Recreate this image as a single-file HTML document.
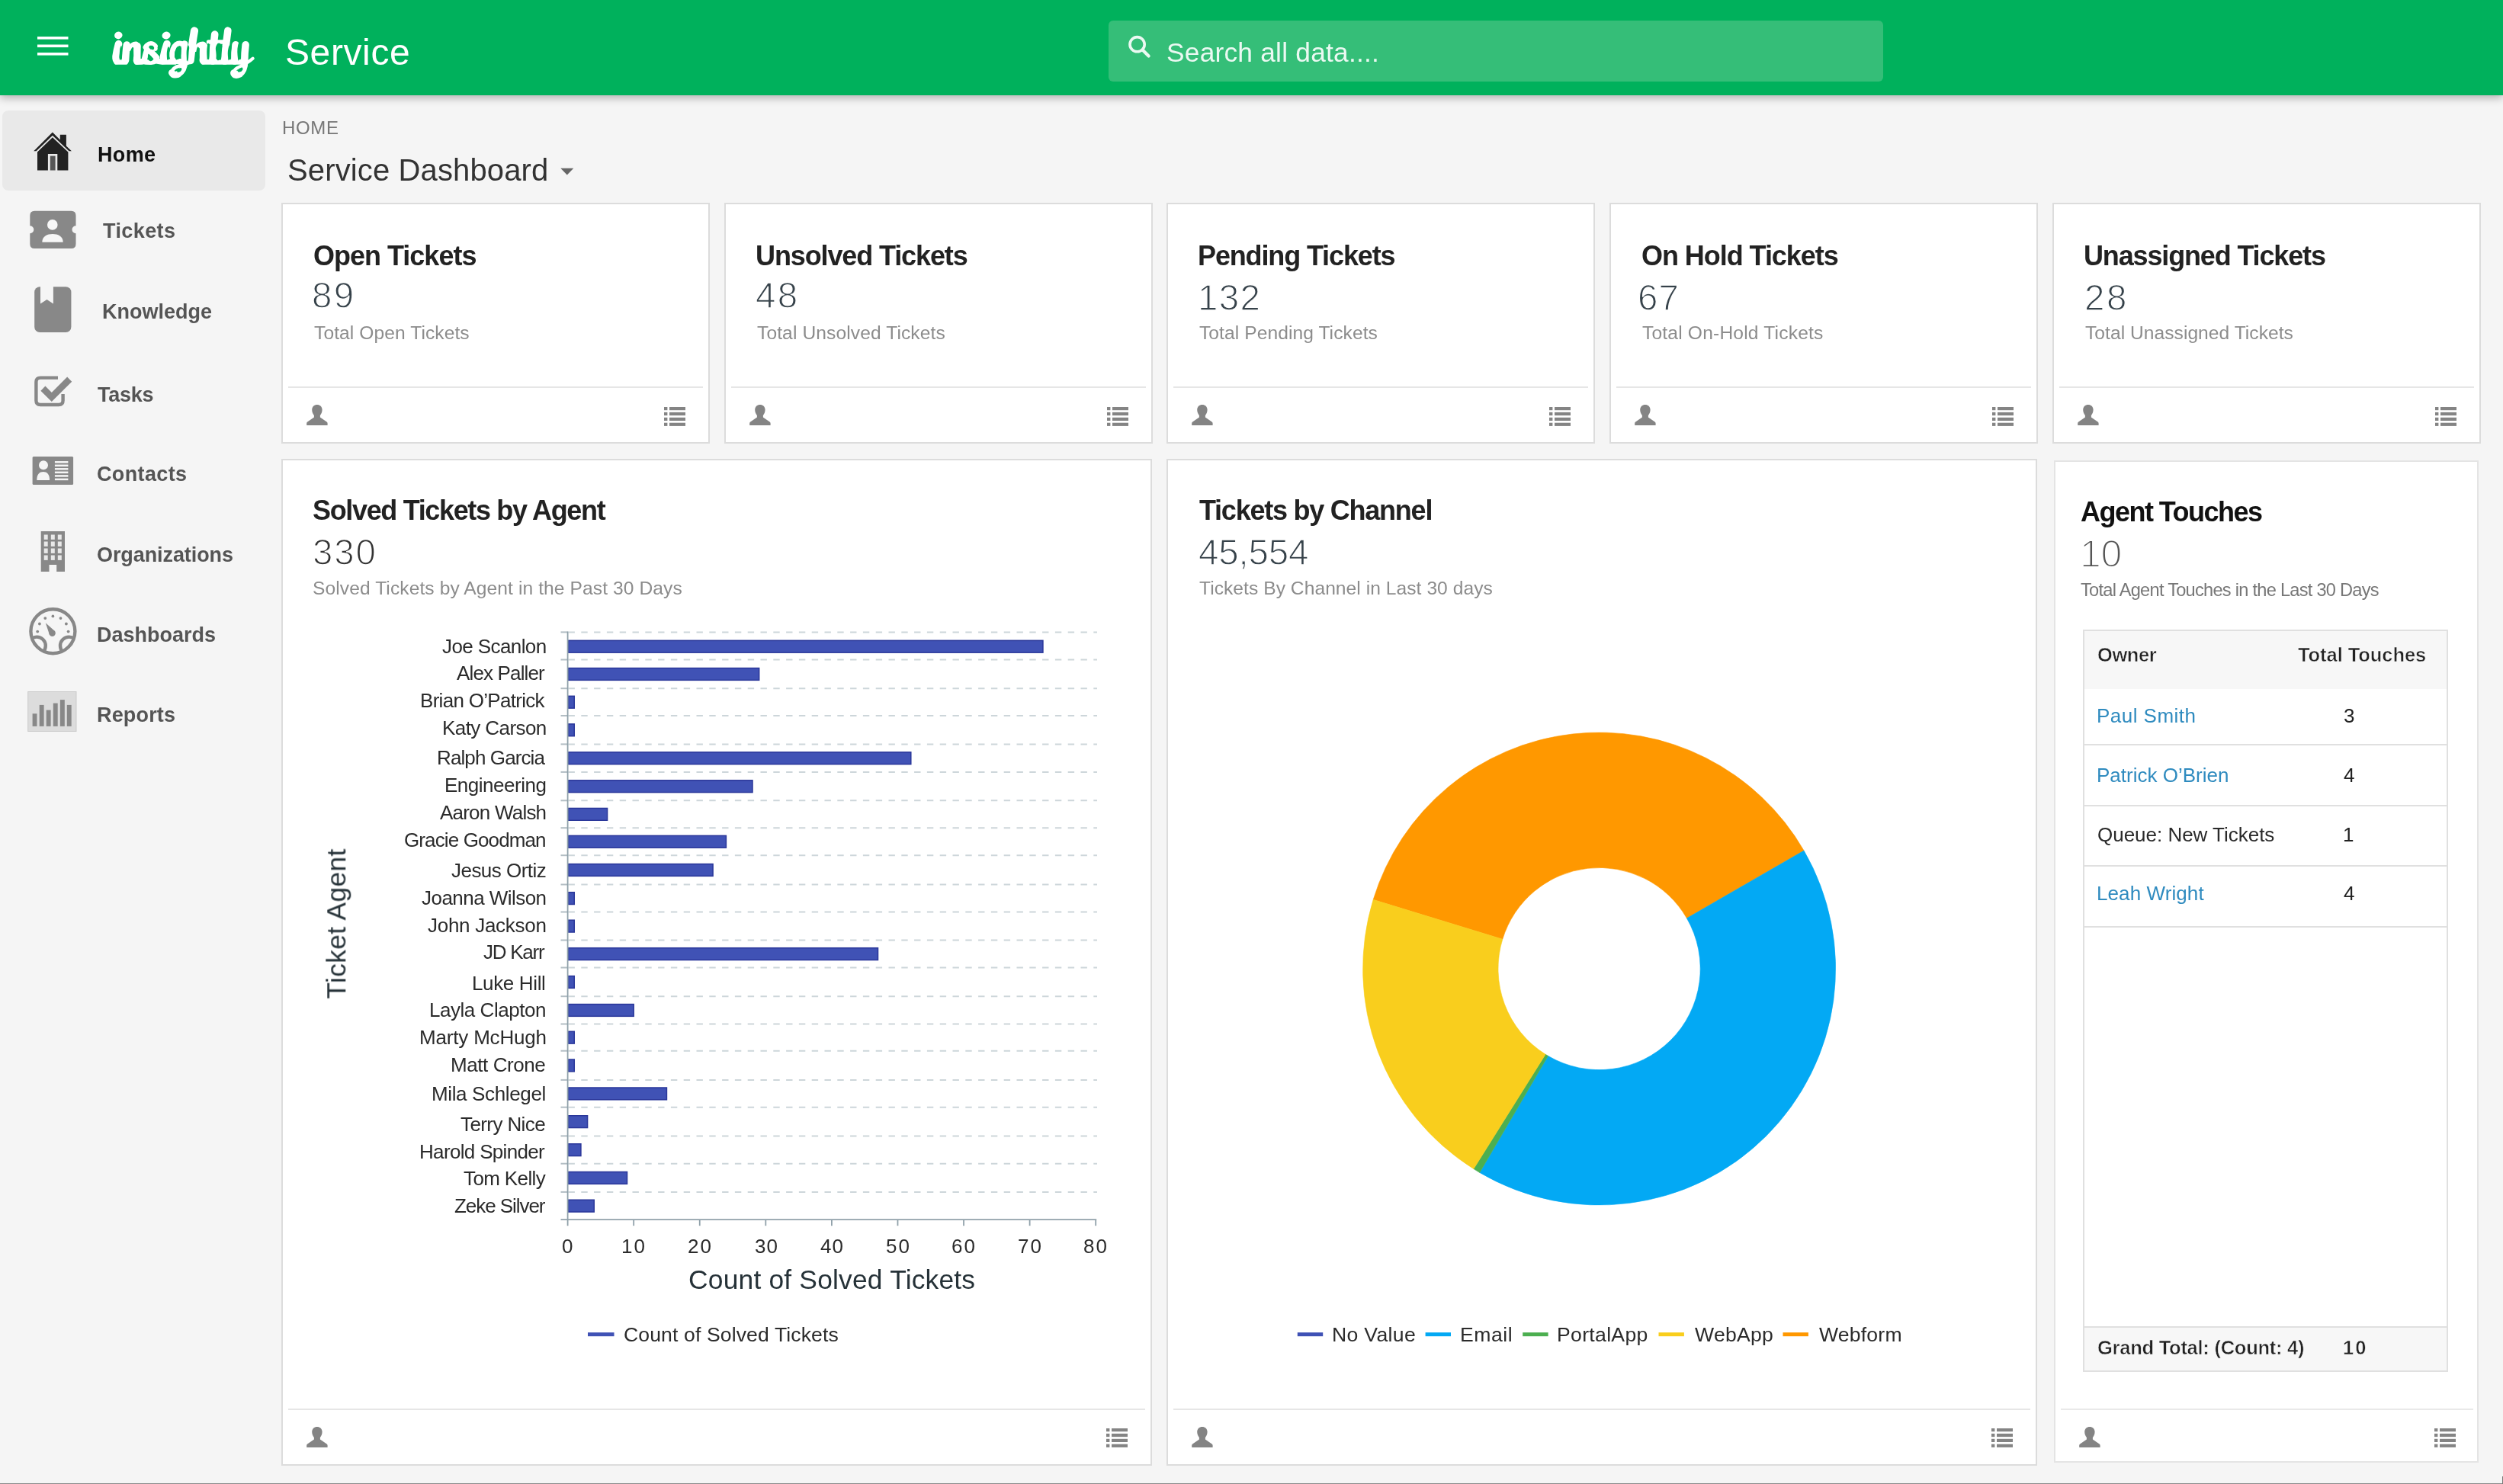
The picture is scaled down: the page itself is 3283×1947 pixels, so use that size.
<!DOCTYPE html>
<html lang="en"><head><meta charset="utf-8"><title>Insightly Service - Service Dashboard</title>
<style>
html,body{margin:0;padding:0;}
body{width:3283px;height:1947px;overflow:hidden;position:relative;background:#f5f5f5;font-family:"Liberation Sans",sans-serif;}
.t{position:absolute;line-height:1;white-space:nowrap;margin:0;padding:0;will-change:transform;}
.a{position:absolute;}
svg{position:absolute;overflow:visible;}
.card{position:absolute;background:#fff;border:2px solid #dcdcdc;box-sizing:border-box;}
.hr{position:absolute;height:2px;background:#e6e6e6;}

</style></head>
<body>
<div class="a" style="left:0;top:0;width:3283px;height:125px;background:#00b15c;box-shadow:0 3px 11px rgba(0,0,0,.30);"></div>
<svg style="left:49px;top:46px" width="41" height="28" viewBox="0 0 41 28"><rect x="0" y="2" width="40.5" height="3.6" fill="#fff"/><rect x="0" y="12.5" width="40.5" height="3.6" fill="#fff"/><rect x="0" y="23" width="40.5" height="3.6" fill="#fff"/></svg>
<svg style="left:144px;top:34px" width="195.00" height="75.00" viewBox="0 0 4134 1590"><g fill="none" stroke="#fff" stroke-linecap="round" stroke-linejoin="round"><path d="M245 500 Q190 700 170 850 Q165 940 200 965" stroke-width="203"/><path d="M190 1000 L435 1000" stroke-width="153"/><path d="M472 530 Q445 750 435 960" stroke-width="203"/><path d="M545 640 Q620 490 730 495" stroke-width="119"/><path d="M760 560 Q752 800 756 960" stroke-width="209"/><path d="M748 1000 L900 995" stroke-width="158"/><path d="M950 975 Q1000 760 1060 575" stroke-width="158"/><path d="M1030 545 Q1150 440 1265 560" stroke-width="136"/><path d="M1010 595 Q1160 720 1298 880" stroke-width="169"/><path d="M1300 880 Q1310 1005 1150 1012 Q1000 1015 900 985" stroke-width="141"/><path d="M1290 975 L1450 1000" stroke-width="153"/><path d="M1590 500 Q1520 700 1495 850 Q1490 940 1520 965" stroke-width="203"/><path d="M1510 1000 L1800 1000" stroke-width="153"/><path d="M2010 500 Q1850 450 1760 640 Q1690 850 1790 985 L1960 985" stroke-width="147"/><path d="M2080 500 Q2072 750 2075 1000 Q2070 1230 1900 1345 Q1760 1385 1725 1300" stroke-width="186"/><path d="M1725 1300 Q1725 1210 1850 1140 Q2050 1075 2250 1000" stroke-width="102"/><path d="M2353 135 Q2288 500 2241 960" stroke-width="215"/><path d="M2388 650 Q2468 500 2588 500" stroke-width="136"/><path d="M2608 560 Q2596 800 2603 960" stroke-width="220"/><path d="M2603 1000 L2858 1000" stroke-width="153"/><path d="M2920 235 Q2863 600 2863 960" stroke-width="203"/><path d="M2748 445 L3168 445" stroke-width="119"/><path d="M2868 1000 L3198 1000" stroke-width="153"/><path d="M3283 130 Q3218 550 3195 960" stroke-width="203"/><path d="M3193 1000 L3468 1000" stroke-width="153"/><path d="M3498 525 Q3468 750 3473 960" stroke-width="203"/><path d="M3473 1000 L3738 1000" stroke-width="153"/><path d="M3776 525 Q3748 750 3746 1000 Q3738 1230 3608 1335 Q3478 1395 3453 1310" stroke-width="203"/><path d="M3453 1310 Q3443 1225 3558 1160 Q3758 1080 3908 960 L3978 905" stroke-width="90"/></g><g fill="#fff"><ellipse cx="240" cy="262" rx="112" ry="100" transform="rotate(-15 240 262)"/><ellipse cx="1570" cy="265" rx="118" ry="103" transform="rotate(-15 1570 265)"/><ellipse cx="1262" cy="628" rx="68" ry="72" transform="rotate(0 1262 628)"/></g><g fill="#00b15c"><path d="M300 584 C321 542 326 516 336 623 C346 730 344 801 330 904 C317 1008 316 933 296 933 C275 933 276 966 268 904 C261 843 262 856 273 749 C283 642 279 626 300 584Z"/><path d="M594 652 C619 597 627 584 649 604 C672 623 659 610 661 710 C662 810 670 828 654 904 C637 980 639 940 611 938 C582 937 580 956 568 899 C555 843 564 851 573 768 C582 686 568 707 594 652Z"/><path d="M1096 569 C1110 542 1111 542 1152 545 C1193 548 1195 545 1219 579 C1242 613 1236 620 1222 647 C1209 673 1215 665 1178 658 C1140 652 1136 657 1109 627 C1082 598 1082 597 1096 569Z"/><path d="M1064 811 C1076 776 1065 770 1107 803 C1148 835 1164 854 1189 908 C1213 961 1209 944 1180 964 C1151 984 1139 986 1103 968 C1066 949 1083 960 1070 908 C1057 855 1052 845 1064 811Z"/><path d="M1599 653 C1621 556 1638 569 1655 614 C1672 659 1656 685 1651 788 C1645 892 1651 876 1638 924 C1625 973 1628 940 1612 934 C1596 927 1595 999 1590 905 C1586 811 1578 750 1599 653Z"/><path d="M1899 574 C1944 554 1944 548 1972 593 C2001 638 1992 619 1985 709 C1978 800 1985 790 1951 865 C1916 939 1925 919 1882 932 C1839 945 1848 952 1822 903 C1796 855 1799 871 1805 787 C1810 703 1807 722 1839 651 C1871 580 1855 593 1899 574Z"/><path d="M1887 1209 C1916 1178 1920 1176 1956 1170 C1992 1163 1988 1162 1995 1189 C2002 1217 2006 1220 1978 1252 C1949 1285 1945 1283 1909 1286 C1873 1289 1877 1288 1870 1262 C1863 1236 1859 1239 1887 1209Z"/><path d="M2146 614 C2168 504 2187 523 2202 575 C2218 627 2202 643 2194 769 C2185 895 2191 888 2177 953 C2162 1018 2164 979 2151 963 C2138 947 2139 1021 2138 905 C2136 788 2125 724 2146 614Z"/><path d="M2415 653 C2439 556 2457 575 2484 614 C2510 653 2492 666 2494 769 C2495 872 2503 864 2488 924 C2473 984 2475 955 2449 948 C2423 942 2422 1003 2411 905 C2399 806 2390 750 2415 653Z"/><path d="M2712 554 C2735 438 2755 483 2773 535 C2790 586 2771 586 2766 709 C2760 832 2769 832 2755 903 C2742 974 2742 929 2725 923 C2709 916 2710 1007 2706 884 C2701 761 2690 670 2712 554Z"/><path d="M2969 535 C3018 445 3064 477 3107 535 C3150 593 3102 587 3098 710 C3094 833 3108 826 3094 904 C3079 981 3094 933 3055 943 C3016 952 3009 978 2978 933 C2946 888 2963 939 2960 807 C2958 674 2920 626 2969 535Z"/><path d="M3299 613 C3326 503 3349 529 3372 574 C3395 620 3371 639 3368 749 C3365 859 3377 843 3364 904 C3351 966 3354 933 3329 933 C3305 933 3301 1011 3291 904 C3281 797 3272 723 3299 613Z"/><path d="M3565 535 C3594 405 3622 457 3647 515 C3672 573 3644 580 3641 709 C3638 839 3652 829 3638 903 C3624 978 3625 932 3599 932 C3574 932 3572 1036 3561 903 C3549 771 3536 664 3565 535Z"/><path d="M3567 1223 C3596 1191 3602 1179 3645 1165 C3687 1150 3683 1152 3694 1179 C3704 1207 3707 1213 3676 1247 C3646 1281 3643 1276 3603 1281 C3564 1286 3571 1281 3559 1262 C3547 1242 3539 1255 3567 1223Z"/></g></svg>
<div class="t" style="left:373.70px;top:44.52px;font-size:48px;color:#fff;letter-spacing:0.607px;">Service</div>
<div class="a" style="left:1454px;top:27px;width:1016px;height:79.5px;border-radius:6px;background:#35be78;"></div>
<svg style="left:1476px;top:42px" width="40" height="40" viewBox="0 0 40 40" fill="none" stroke="#ecf9f2" stroke-width="3.6"><circle cx="15.6" cy="16.2" r="9.6"/><path d="M22.6 23.4 L30.6 31.4" stroke-linecap="round" stroke-width="4.2"/></svg>
<div class="t" style="left:1530.30px;top:50.87px;font-size:35.3px;color:rgba(255,255,255,.9);letter-spacing:0.229px;">Search all data....</div>
<div class="a" style="left:3px;top:145px;width:345px;height:105px;border-radius:8px;background:#e9e9e9;"></div>
<svg style="left:40px;top:170px" width="60" height="58" viewBox="40 170 60 58">
<path d="M44.2 198.3 L68.9 173.6 L78.8 183.5 L78.8 176.8 L86.9 176.8 L86.9 191.6 L93.9 198.3 L90.5 198.3 L68.9 177.8 L47.6 198.3 Z" fill="#222"/>
<path d="M49 199.5 L68.9 180.3 L89.4 199.5 L89.4 223.5 L75.3 223.5 L75.3 202 L62.9 202 L62.9 223.5 L49 223.5 Z" fill="#222"/>
<rect x="65.8" y="204.6" width="6.8" height="18.9" fill="#555"/>
</svg>
<svg style="left:36px;top:272px" width="68" height="58" viewBox="36 272 68 58">
<path d="M45.3 276.7 H93.5 Q99.5 276.7 99.5 282.7 V296.3 A5 5 0 0 0 99.5 306.3 V319.9 Q99.5 325.9 93.5 325.9 H45.3 Q39.3 325.9 39.3 319.9 V306.3 A5 5 0 0 0 39.3 296.3 V282.7 Q39.3 276.7 45.3 276.7 Z" fill="#888"/>
<circle cx="68.8" cy="294.9" r="6.8" fill="#f7f7f7"/>
<path d="M55.3 317.8 C55.3 310 62 307 69 307 C76 307 82.7 310 82.7 317.8 Z" fill="#f7f7f7"/>
</svg>
<svg style="left:40px;top:372px" width="60" height="70" viewBox="40 372 60 70">
<rect x="45.2" y="376.2" width="48.2" height="59.9" rx="7" fill="#888"/>
<path d="M53 375 H69.9 V398.4 L61.5 393 L53 398.4 Z" fill="#f5f5f5"/>
</svg>
<svg style="left:40px;top:488px" width="60" height="52" viewBox="40 488 60 52" fill="none" stroke="#888">
<path d="M76 495.6 H53 Q47.4 495.6 47.4 501.2 V525.5 Q47.4 531 53 531 H77 Q82.6 531 82.6 525.5 V517" stroke-width="4.4"/>
<path d="M56.4 509.6 L67.8 521 L91.2 497.6" stroke-width="8.6"/>
</svg>
<svg style="left:40px;top:594px" width="60" height="46" viewBox="40 594 60 46">
<rect x="42.6" y="598.9" width="53.5" height="37" rx="1.5" fill="#888"/>
<circle cx="57" cy="610.3" r="6" fill="#f5f5f5"/>
<path d="M48.3 629.9 C48.3 622 52 619 56.7 619 C61.4 619 65.1 622 65.1 629.9 Z" fill="#f5f5f5"/>
<rect x="71.9" y="605.05" width="17.5" height="2.5" fill="#f5f5f5"/><rect x="71.9" y="609.55" width="17.5" height="2.5" fill="#f5f5f5"/><rect x="71.9" y="614.05" width="17.5" height="2.5" fill="#f5f5f5"/><rect x="71.9" y="618.55" width="17.5" height="2.5" fill="#f5f5f5"/><rect x="71.9" y="623.15" width="17.5" height="2.5" fill="#f5f5f5"/><rect x="71.9" y="627.65" width="17.5" height="2.5" fill="#f5f5f5"/>
</svg>
<svg style="left:50px;top:692px" width="40" height="62" viewBox="50 692 40 62">
<path d="M53.7 697 H85 V750.1 H74.2 V741 H64.5 V750.1 H53.7 Z" fill="#888"/>
<rect x="57.7" y="701.5" width="5" height="6.4" fill="#e9e9e9"/><rect x="57.7" y="710.5" width="5" height="6.4" fill="#e9e9e9"/><rect x="57.7" y="719.5" width="5" height="6.4" fill="#e9e9e9"/><rect x="57.7" y="728.5" width="5" height="6.4" fill="#e9e9e9"/><rect x="66.8" y="701.5" width="5" height="6.4" fill="#e9e9e9"/><rect x="66.8" y="710.5" width="5" height="6.4" fill="#e9e9e9"/><rect x="66.8" y="719.5" width="5" height="6.4" fill="#e9e9e9"/><rect x="66.8" y="728.5" width="5" height="6.4" fill="#e9e9e9"/><rect x="75.8" y="701.5" width="5" height="6.4" fill="#e9e9e9"/><rect x="75.8" y="710.5" width="5" height="6.4" fill="#e9e9e9"/><rect x="75.8" y="719.5" width="5" height="6.4" fill="#e9e9e9"/><rect x="75.8" y="728.5" width="5" height="6.4" fill="#e9e9e9"/>
</svg>
<svg style="left:34px;top:792px" width="72" height="72" viewBox="34 792 72 72" fill="none" stroke="#888" stroke-width="4.4">
<defs><clipPath id="dc"><circle cx="69.4" cy="828.3" r="29.2"/></clipPath></defs>
<circle cx="69.4" cy="828.3" r="29"/>
<g clip-path="url(#dc)"><circle cx="48.2" cy="847.2" r="11.6"/><circle cx="90.6" cy="847.2" r="11.6"/></g>
<circle cx="49.20" cy="828.60" r="1.9" fill="#888" stroke="none"/><circle cx="51.91" cy="818.50" r="1.9" fill="#888" stroke="none"/><circle cx="59.30" cy="811.11" r="1.9" fill="#888" stroke="none"/><circle cx="69.40" cy="808.40" r="1.9" fill="#888" stroke="none"/><circle cx="79.50" cy="811.11" r="1.9" fill="#888" stroke="none"/><circle cx="86.89" cy="818.50" r="1.9" fill="#888" stroke="none"/><circle cx="89.60" cy="828.60" r="1.9" fill="#888" stroke="none"/>
<circle cx="68.6" cy="830.8" r="4.2" fill="#888" stroke="none"/>
<path d="M59.8 817.3 L72.4 828.6 L65 833 Z" fill="#888" stroke="none"/>
</svg>
<svg style="left:34px;top:904px" width="70" height="60" viewBox="34 904 70 60">
<rect x="36.7" y="907.5" width="63.3" height="52" fill="#dcdcdc" stroke="#cbcbcb" stroke-width="1"/>
<rect x="42.6" y="936.3" width="5.9" height="16.6" fill="#888"/><rect x="51.7" y="924.9" width="5.9" height="28.0" fill="#888"/><rect x="60.7" y="931.6" width="5.9" height="21.3" fill="#888"/><rect x="69.8" y="922.6" width="5.9" height="30.3" fill="#888"/><rect x="78.9" y="918.1" width="5.9" height="34.8" fill="#888"/><rect x="87.8" y="924.9" width="5.9" height="28.0" fill="#888"/>
</svg>
<div class="t" style="left:127.50px;top:189.52px;font-size:27px;color:#111;font-weight:bold;letter-spacing:0.334px;">Home</div>
<div class="t" style="left:134.60px;top:289.52px;font-size:27px;color:#555;font-weight:bold;letter-spacing:0.409px;">Tickets</div>
<div class="t" style="left:133.60px;top:395.52px;font-size:27px;color:#555;font-weight:bold;">Knowledge</div>
<div class="t" style="left:127.60px;top:504.52px;font-size:27px;color:#555;font-weight:bold;letter-spacing:-0.259px;">Tasks</div>
<div class="t" style="left:126.60px;top:608.52px;font-size:27px;color:#555;font-weight:bold;letter-spacing:0.357px;">Contacts</div>
<div class="t" style="left:126.60px;top:714.52px;font-size:27px;color:#555;font-weight:bold;letter-spacing:-0.084px;">Organizations</div>
<div class="t" style="left:126.60px;top:819.52px;font-size:27px;color:#555;font-weight:bold;">Dashboards</div>
<div class="t" style="left:126.60px;top:924.52px;font-size:27px;color:#555;font-weight:bold;letter-spacing:0.167px;">Reports</div>
<div class="t" style="left:370.00px;top:155.52px;font-size:24px;color:#777;letter-spacing:0.669px;">HOME</div>
<div class="t" style="left:376.80px;top:203.02px;font-size:40px;color:#333;letter-spacing:0.129px;">Service Dashboard</div>
<svg style="left:735px;top:220px" width="18" height="10" viewBox="0 0 18 10"><path d="M0.3 0.8 H17.3 L8.8 9.4 Z" fill="#666"/></svg>
<div class="card" style="left:369px;top:266px;width:562px;height:316px;border-color:#dcdcdc;"></div>
<div class="t" style="left:410.60px;top:317.52px;font-size:36px;color:#222;font-weight:bold;letter-spacing:-1.000px;">Open Tickets</div>
<div class="t" style="left:409.30px;top:363.77px;font-size:47.5px;color:#36424a;letter-spacing:2.383px;-webkit-text-stroke:1.3px #fff;">89</div>
<div class="t" style="left:411.60px;top:425.22px;font-size:24.6px;color:#8c8c8c;letter-spacing:0.079px;">Total Open Tickets</div>
<div class="hr" style="left:378px;top:507px;width:544px;"></div>
<svg style="left:402px;top:531.3px" width="28" height="28" viewBox="0 0 28 28"><path d="M13.9 0 C17.6 0 20.6 2.7 20.6 6.6 C20.6 9.4 19.6 12.2 17.9 13.9 L17.9 16.4 L26.6 22.6 C27.4 23.2 27.6 23.8 27.6 24.6 L27.6 27 L0.2 27 L0.2 24.6 C0.2 23.8 0.4 23.2 1.2 22.6 L9.9 16.4 L9.9 13.9 C8.2 12.2 7.2 9.4 7.2 6.6 C7.2 2.7 10.2 0 13.9 0 Z" fill="#848484"/></svg>
<svg style="left:871px;top:533.8px" width="28" height="25" viewBox="0 0 28 25"><rect x="0" y="0" width="4.4" height="4.2" fill="#848484"/><rect x="7" y="0" width="21" height="4.2" fill="#848484"/><rect x="0" y="6.9" width="4.4" height="4.2" fill="#848484"/><rect x="7" y="6.9" width="21" height="4.2" fill="#848484"/><rect x="0" y="13.8" width="4.4" height="4.2" fill="#848484"/><rect x="7" y="13.8" width="21" height="4.2" fill="#848484"/><rect x="0" y="20.7" width="4.4" height="4.2" fill="#848484"/><rect x="7" y="20.7" width="21" height="4.2" fill="#848484"/></svg>
<div class="card" style="left:950px;top:266px;width:562px;height:316px;border-color:#dcdcdc;"></div>
<div class="t" style="left:990.60px;top:317.52px;font-size:36px;color:#222;font-weight:bold;letter-spacing:-1.115px;">Unsolved Tickets</div>
<div class="t" style="left:990.90px;top:363.77px;font-size:47.5px;color:#36424a;letter-spacing:2.283px;-webkit-text-stroke:1.3px #fff;">48</div>
<div class="t" style="left:992.60px;top:425.22px;font-size:24.6px;color:#8c8c8c;letter-spacing:0.099px;">Total Unsolved Tickets</div>
<div class="hr" style="left:959px;top:507px;width:544px;"></div>
<svg style="left:983px;top:531.3px" width="28" height="28" viewBox="0 0 28 28"><path d="M13.9 0 C17.6 0 20.6 2.7 20.6 6.6 C20.6 9.4 19.6 12.2 17.9 13.9 L17.9 16.4 L26.6 22.6 C27.4 23.2 27.6 23.8 27.6 24.6 L27.6 27 L0.2 27 L0.2 24.6 C0.2 23.8 0.4 23.2 1.2 22.6 L9.9 16.4 L9.9 13.9 C8.2 12.2 7.2 9.4 7.2 6.6 C7.2 2.7 10.2 0 13.9 0 Z" fill="#848484"/></svg>
<svg style="left:1452px;top:533.8px" width="28" height="25" viewBox="0 0 28 25"><rect x="0" y="0" width="4.4" height="4.2" fill="#848484"/><rect x="7" y="0" width="21" height="4.2" fill="#848484"/><rect x="0" y="6.9" width="4.4" height="4.2" fill="#848484"/><rect x="7" y="6.9" width="21" height="4.2" fill="#848484"/><rect x="0" y="13.8" width="4.4" height="4.2" fill="#848484"/><rect x="7" y="13.8" width="21" height="4.2" fill="#848484"/><rect x="0" y="20.7" width="4.4" height="4.2" fill="#848484"/><rect x="7" y="20.7" width="21" height="4.2" fill="#848484"/></svg>
<div class="card" style="left:1530px;top:266px;width:562px;height:316px;border-color:#dcdcdc;"></div>
<div class="t" style="left:1570.60px;top:317.52px;font-size:36px;color:#222;font-weight:bold;letter-spacing:-1.135px;">Pending Tickets</div>
<div class="t" style="left:1571.30px;top:366.77px;font-size:47.5px;color:#36424a;letter-spacing:1.283px;-webkit-text-stroke:1.3px #fff;">132</div>
<div class="t" style="left:1572.60px;top:425.22px;font-size:24.6px;color:#8c8c8c;letter-spacing:0.072px;">Total Pending Tickets</div>
<div class="hr" style="left:1539px;top:507px;width:544px;"></div>
<svg style="left:1563px;top:531.3px" width="28" height="28" viewBox="0 0 28 28"><path d="M13.9 0 C17.6 0 20.6 2.7 20.6 6.6 C20.6 9.4 19.6 12.2 17.9 13.9 L17.9 16.4 L26.6 22.6 C27.4 23.2 27.6 23.8 27.6 24.6 L27.6 27 L0.2 27 L0.2 24.6 C0.2 23.8 0.4 23.2 1.2 22.6 L9.9 16.4 L9.9 13.9 C8.2 12.2 7.2 9.4 7.2 6.6 C7.2 2.7 10.2 0 13.9 0 Z" fill="#848484"/></svg>
<svg style="left:2032px;top:533.8px" width="28" height="25" viewBox="0 0 28 25"><rect x="0" y="0" width="4.4" height="4.2" fill="#848484"/><rect x="7" y="0" width="21" height="4.2" fill="#848484"/><rect x="0" y="6.9" width="4.4" height="4.2" fill="#848484"/><rect x="7" y="6.9" width="21" height="4.2" fill="#848484"/><rect x="0" y="13.8" width="4.4" height="4.2" fill="#848484"/><rect x="7" y="13.8" width="21" height="4.2" fill="#848484"/><rect x="0" y="20.7" width="4.4" height="4.2" fill="#848484"/><rect x="7" y="20.7" width="21" height="4.2" fill="#848484"/></svg>
<div class="card" style="left:2111px;top:266px;width:562px;height:316px;border-color:#dcdcdc;"></div>
<div class="t" style="left:2152.60px;top:317.52px;font-size:36px;color:#222;font-weight:bold;letter-spacing:-1.048px;">On Hold Tickets</div>
<div class="t" style="left:2147.80px;top:366.77px;font-size:47.5px;color:#36424a;letter-spacing:1.083px;-webkit-text-stroke:1.3px #fff;">67</div>
<div class="t" style="left:2153.60px;top:425.22px;font-size:24.6px;color:#8c8c8c;letter-spacing:0.181px;">Total On-Hold Tickets</div>
<div class="hr" style="left:2120px;top:507px;width:544px;"></div>
<svg style="left:2144px;top:531.3px" width="28" height="28" viewBox="0 0 28 28"><path d="M13.9 0 C17.6 0 20.6 2.7 20.6 6.6 C20.6 9.4 19.6 12.2 17.9 13.9 L17.9 16.4 L26.6 22.6 C27.4 23.2 27.6 23.8 27.6 24.6 L27.6 27 L0.2 27 L0.2 24.6 C0.2 23.8 0.4 23.2 1.2 22.6 L9.9 16.4 L9.9 13.9 C8.2 12.2 7.2 9.4 7.2 6.6 C7.2 2.7 10.2 0 13.9 0 Z" fill="#848484"/></svg>
<svg style="left:2613px;top:533.8px" width="28" height="25" viewBox="0 0 28 25"><rect x="0" y="0" width="4.4" height="4.2" fill="#848484"/><rect x="7" y="0" width="21" height="4.2" fill="#848484"/><rect x="0" y="6.9" width="4.4" height="4.2" fill="#848484"/><rect x="7" y="6.9" width="21" height="4.2" fill="#848484"/><rect x="0" y="13.8" width="4.4" height="4.2" fill="#848484"/><rect x="7" y="13.8" width="21" height="4.2" fill="#848484"/><rect x="0" y="20.7" width="4.4" height="4.2" fill="#848484"/><rect x="7" y="20.7" width="21" height="4.2" fill="#848484"/></svg>
<div class="card" style="left:2692px;top:266px;width:562px;height:316px;border-color:#dcdcdc;"></div>
<div class="t" style="left:2732.60px;top:317.52px;font-size:36px;color:#222;font-weight:bold;letter-spacing:-1.150px;">Unassigned Tickets</div>
<div class="t" style="left:2734.30px;top:366.77px;font-size:47.5px;color:#36424a;letter-spacing:2.683px;-webkit-text-stroke:1.3px #fff;">28</div>
<div class="t" style="left:2734.60px;top:425.22px;font-size:24.6px;color:#8c8c8c;letter-spacing:0.036px;">Total Unassigned Tickets</div>
<div class="hr" style="left:2701px;top:507px;width:544px;"></div>
<svg style="left:2725px;top:531.3px" width="28" height="28" viewBox="0 0 28 28"><path d="M13.9 0 C17.6 0 20.6 2.7 20.6 6.6 C20.6 9.4 19.6 12.2 17.9 13.9 L17.9 16.4 L26.6 22.6 C27.4 23.2 27.6 23.8 27.6 24.6 L27.6 27 L0.2 27 L0.2 24.6 C0.2 23.8 0.4 23.2 1.2 22.6 L9.9 16.4 L9.9 13.9 C8.2 12.2 7.2 9.4 7.2 6.6 C7.2 2.7 10.2 0 13.9 0 Z" fill="#848484"/></svg>
<svg style="left:3194px;top:533.8px" width="28" height="25" viewBox="0 0 28 25"><rect x="0" y="0" width="4.4" height="4.2" fill="#848484"/><rect x="7" y="0" width="21" height="4.2" fill="#848484"/><rect x="0" y="6.9" width="4.4" height="4.2" fill="#848484"/><rect x="7" y="6.9" width="21" height="4.2" fill="#848484"/><rect x="0" y="13.8" width="4.4" height="4.2" fill="#848484"/><rect x="7" y="13.8" width="21" height="4.2" fill="#848484"/><rect x="0" y="20.7" width="4.4" height="4.2" fill="#848484"/><rect x="7" y="20.7" width="21" height="4.2" fill="#848484"/></svg>
<div class="card" style="left:369px;top:602px;width:1142px;height:1320.5px;border-color:#dcdcdc;"></div>
<div class="t" style="left:410.30px;top:651.52px;font-size:36px;color:#222;font-weight:bold;letter-spacing:-1.340px;">Solved Tickets by Agent</div>
<div class="t" style="left:410.30px;top:700.77px;font-size:47.5px;color:#333;letter-spacing:1.833px;-webkit-text-stroke:1.5px #fff;">330</div>
<div class="t" style="left:410.30px;top:760.22px;font-size:24.6px;color:#8c8c8c;letter-spacing:0.083px;">Solved Tickets by Agent in the Past 30 Days</div>
<div class="hr" style="left:378px;top:1847.5px;width:1124px;"></div>
<svg style="left:402px;top:1871.7px" width="28" height="28" viewBox="0 0 28 28"><path d="M13.9 0 C17.6 0 20.6 2.7 20.6 6.6 C20.6 9.4 19.6 12.2 17.9 13.9 L17.9 16.4 L26.6 22.6 C27.4 23.2 27.6 23.8 27.6 24.6 L27.6 27 L0.2 27 L0.2 24.6 C0.2 23.8 0.4 23.2 1.2 22.6 L9.9 16.4 L9.9 13.9 C8.2 12.2 7.2 9.4 7.2 6.6 C7.2 2.7 10.2 0 13.9 0 Z" fill="#848484"/></svg>
<svg style="left:1451px;top:1874.2px" width="28" height="25" viewBox="0 0 28 25"><rect x="0" y="0" width="4.4" height="4.2" fill="#848484"/><rect x="7" y="0" width="21" height="4.2" fill="#848484"/><rect x="0" y="6.9" width="4.4" height="4.2" fill="#848484"/><rect x="7" y="6.9" width="21" height="4.2" fill="#848484"/><rect x="0" y="13.8" width="4.4" height="4.2" fill="#848484"/><rect x="7" y="13.8" width="21" height="4.2" fill="#848484"/><rect x="0" y="20.7" width="4.4" height="4.2" fill="#848484"/><rect x="7" y="20.7" width="21" height="4.2" fill="#848484"/></svg>
<svg style="left:0;top:0" width="3283" height="1947" viewBox="0 0 3283 1947"><path d="M735.5 829.4 H744.6" stroke="#b3bec4" stroke-width="2"/><path d="M745.5 829.4 H1439" stroke="#cdd6da" stroke-width="2" stroke-dasharray="8.4 8.4"/><path d="M735.5 865.5 H744.6" stroke="#b3bec4" stroke-width="2"/><path d="M745.5 865.5 H1439" stroke="#cdd6da" stroke-width="2" stroke-dasharray="8.4 8.4"/><path d="M735.5 903.2 H744.6" stroke="#b3bec4" stroke-width="2"/><path d="M745.5 903.2 H1439" stroke="#cdd6da" stroke-width="2" stroke-dasharray="8.4 8.4"/><path d="M735.5 939.0 H744.6" stroke="#b3bec4" stroke-width="2"/><path d="M745.5 939.0 H1439" stroke="#cdd6da" stroke-width="2" stroke-dasharray="8.4 8.4"/><path d="M735.5 976.4 H744.6" stroke="#b3bec4" stroke-width="2"/><path d="M745.5 976.4 H1439" stroke="#cdd6da" stroke-width="2" stroke-dasharray="8.4 8.4"/><path d="M735.5 1012.9 H744.6" stroke="#b3bec4" stroke-width="2"/><path d="M745.5 1012.9 H1439" stroke="#cdd6da" stroke-width="2" stroke-dasharray="8.4 8.4"/><path d="M735.5 1050.3 H744.6" stroke="#b3bec4" stroke-width="2"/><path d="M745.5 1050.3 H1439" stroke="#cdd6da" stroke-width="2" stroke-dasharray="8.4 8.4"/><path d="M735.5 1086.2 H744.6" stroke="#b3bec4" stroke-width="2"/><path d="M745.5 1086.2 H1439" stroke="#cdd6da" stroke-width="2" stroke-dasharray="8.4 8.4"/><path d="M735.5 1122.2 H744.6" stroke="#b3bec4" stroke-width="2"/><path d="M745.5 1122.2 H1439" stroke="#cdd6da" stroke-width="2" stroke-dasharray="8.4 8.4"/><path d="M735.5 1160.5 H744.6" stroke="#b3bec4" stroke-width="2"/><path d="M745.5 1160.5 H1439" stroke="#cdd6da" stroke-width="2" stroke-dasharray="8.4 8.4"/><path d="M735.5 1196.5 H744.6" stroke="#b3bec4" stroke-width="2"/><path d="M745.5 1196.5 H1439" stroke="#cdd6da" stroke-width="2" stroke-dasharray="8.4 8.4"/><path d="M735.5 1233.5 H744.6" stroke="#b3bec4" stroke-width="2"/><path d="M745.5 1233.5 H1439" stroke="#cdd6da" stroke-width="2" stroke-dasharray="8.4 8.4"/><path d="M735.5 1269.5 H744.6" stroke="#b3bec4" stroke-width="2"/><path d="M745.5 1269.5 H1439" stroke="#cdd6da" stroke-width="2" stroke-dasharray="8.4 8.4"/><path d="M735.5 1307.2 H744.6" stroke="#b3bec4" stroke-width="2"/><path d="M745.5 1307.2 H1439" stroke="#cdd6da" stroke-width="2" stroke-dasharray="8.4 8.4"/><path d="M735.5 1343.5 H744.6" stroke="#b3bec4" stroke-width="2"/><path d="M745.5 1343.5 H1439" stroke="#cdd6da" stroke-width="2" stroke-dasharray="8.4 8.4"/><path d="M735.5 1378.7 H744.6" stroke="#b3bec4" stroke-width="2"/><path d="M745.5 1378.7 H1439" stroke="#cdd6da" stroke-width="2" stroke-dasharray="8.4 8.4"/><path d="M735.5 1416.9 H744.6" stroke="#b3bec4" stroke-width="2"/><path d="M745.5 1416.9 H1439" stroke="#cdd6da" stroke-width="2" stroke-dasharray="8.4 8.4"/><path d="M735.5 1452.7 H744.6" stroke="#b3bec4" stroke-width="2"/><path d="M745.5 1452.7 H1439" stroke="#cdd6da" stroke-width="2" stroke-dasharray="8.4 8.4"/><path d="M735.5 1490.4 H744.6" stroke="#b3bec4" stroke-width="2"/><path d="M745.5 1490.4 H1439" stroke="#cdd6da" stroke-width="2" stroke-dasharray="8.4 8.4"/><path d="M735.5 1526.7 H744.6" stroke="#b3bec4" stroke-width="2"/><path d="M745.5 1526.7 H1439" stroke="#cdd6da" stroke-width="2" stroke-dasharray="8.4 8.4"/><path d="M735.5 1563.9 H744.6" stroke="#b3bec4" stroke-width="2"/><path d="M745.5 1563.9 H1439" stroke="#cdd6da" stroke-width="2" stroke-dasharray="8.4 8.4"/><rect x="745.35" y="840.35" width="622.59" height="15.8" fill="#4052b5" stroke="#2a379a" stroke-width="1.5"/><rect x="745.35" y="876.55" width="250.32" height="15.8" fill="#4052b5" stroke="#2a379a" stroke-width="1.5"/><rect x="745.35" y="913.30" width="7.91" height="15.8" fill="#4052b5" stroke="#2a379a" stroke-width="1.5"/><rect x="745.35" y="949.90" width="7.91" height="15.8" fill="#4052b5" stroke="#2a379a" stroke-width="1.5"/><rect x="745.35" y="986.85" width="449.44" height="15.8" fill="#4052b5" stroke="#2a379a" stroke-width="1.5"/><rect x="745.35" y="1023.80" width="241.66" height="15.8" fill="#4052b5" stroke="#2a379a" stroke-width="1.5"/><rect x="745.35" y="1060.45" width="51.20" height="15.8" fill="#4052b5" stroke="#2a379a" stroke-width="1.5"/><rect x="745.35" y="1096.40" width="207.03" height="15.8" fill="#4052b5" stroke="#2a379a" stroke-width="1.5"/><rect x="745.35" y="1133.55" width="189.72" height="15.8" fill="#4052b5" stroke="#2a379a" stroke-width="1.5"/><rect x="745.35" y="1170.70" width="7.91" height="15.8" fill="#4052b5" stroke="#2a379a" stroke-width="1.5"/><rect x="745.35" y="1207.20" width="7.91" height="15.8" fill="#4052b5" stroke="#2a379a" stroke-width="1.5"/><rect x="745.35" y="1243.70" width="406.15" height="15.8" fill="#4052b5" stroke="#2a379a" stroke-width="1.5"/><rect x="745.35" y="1280.55" width="7.91" height="15.8" fill="#4052b5" stroke="#2a379a" stroke-width="1.5"/><rect x="745.35" y="1317.55" width="85.83" height="15.8" fill="#4052b5" stroke="#2a379a" stroke-width="1.5"/><rect x="745.35" y="1353.30" width="7.91" height="15.8" fill="#4052b5" stroke="#2a379a" stroke-width="1.5"/><rect x="745.35" y="1390.00" width="7.91" height="15.8" fill="#4052b5" stroke="#2a379a" stroke-width="1.5"/><rect x="745.35" y="1427.00" width="129.11" height="15.8" fill="#4052b5" stroke="#2a379a" stroke-width="1.5"/><rect x="745.35" y="1463.75" width="25.22" height="15.8" fill="#4052b5" stroke="#2a379a" stroke-width="1.5"/><rect x="745.35" y="1500.75" width="16.57" height="15.8" fill="#4052b5" stroke="#2a379a" stroke-width="1.5"/><rect x="745.35" y="1537.50" width="77.17" height="15.8" fill="#4052b5" stroke="#2a379a" stroke-width="1.5"/><rect x="745.35" y="1574.25" width="33.88" height="15.8" fill="#4052b5" stroke="#2a379a" stroke-width="1.5"/><path d="M744.6 828.5 V1608.2" stroke="#90a1aa" stroke-width="1.8"/><path d="M735.5 1600.2 H1438.2" stroke="#90a1aa" stroke-width="1.8"/><path d="M831.18 1600.2 V1608.2" stroke="#90a1aa" stroke-width="1.8"/><path d="M917.75 1600.2 V1608.2" stroke="#90a1aa" stroke-width="1.8"/><path d="M1004.33 1600.2 V1608.2" stroke="#90a1aa" stroke-width="1.8"/><path d="M1090.90 1600.2 V1608.2" stroke="#90a1aa" stroke-width="1.8"/><path d="M1177.48 1600.2 V1608.2" stroke="#90a1aa" stroke-width="1.8"/><path d="M1264.05 1600.2 V1608.2" stroke="#90a1aa" stroke-width="1.8"/><path d="M1350.62 1600.2 V1608.2" stroke="#90a1aa" stroke-width="1.8"/><path d="M1437.20 1600.2 V1608.2" stroke="#90a1aa" stroke-width="1.8"/><rect x="771" y="1748.2" width="34.5" height="5" fill="#4052b5"/></svg>
<div class="t" style="left:579.60px;top:835.02px;font-size:26px;color:#2b2b2b;letter-spacing:-0.594px;">Joe Scanlon</div>
<div class="t" style="left:599.20px;top:870.02px;font-size:26px;color:#2b2b2b;letter-spacing:-0.852px;">Alex Paller</div>
<div class="t" style="left:550.70px;top:906.02px;font-size:26px;color:#2b2b2b;letter-spacing:-0.699px;">Brian O’Patrick</div>
<div class="t" style="left:579.50px;top:942.02px;font-size:26px;color:#2b2b2b;letter-spacing:-0.580px;">Katy Carson</div>
<div class="t" style="left:572.80px;top:981.02px;font-size:26px;color:#2b2b2b;letter-spacing:-0.889px;">Ralph Garcia</div>
<div class="t" style="left:582.90px;top:1017.02px;font-size:26px;color:#2b2b2b;letter-spacing:-0.491px;">Engineering</div>
<div class="t" style="left:576.70px;top:1053.02px;font-size:26px;color:#2b2b2b;letter-spacing:-0.782px;">Aaron Walsh</div>
<div class="t" style="left:530.20px;top:1089.02px;font-size:26px;color:#2b2b2b;letter-spacing:-0.879px;">Gracie Goodman</div>
<div class="t" style="left:591.60px;top:1129.02px;font-size:26px;color:#2b2b2b;letter-spacing:-0.533px;">Jesus Ortiz</div>
<div class="t" style="left:552.70px;top:1165.02px;font-size:26px;color:#2b2b2b;letter-spacing:-0.540px;">Joanna Wilson</div>
<div class="t" style="left:560.90px;top:1201.02px;font-size:26px;color:#2b2b2b;letter-spacing:-0.284px;">John Jackson</div>
<div class="t" style="left:634.30px;top:1236.02px;font-size:26px;color:#2b2b2b;letter-spacing:-1.243px;">JD Karr</div>
<div class="t" style="left:619.20px;top:1277.02px;font-size:26px;color:#2b2b2b;letter-spacing:-0.354px;">Luke Hill</div>
<div class="t" style="left:563.30px;top:1312.02px;font-size:26px;color:#2b2b2b;letter-spacing:-0.461px;">Layla Clapton</div>
<div class="t" style="left:549.70px;top:1348.02px;font-size:26px;color:#2b2b2b;letter-spacing:-0.180px;">Marty McHugh</div>
<div class="t" style="left:591.00px;top:1384.02px;font-size:26px;color:#2b2b2b;letter-spacing:-0.427px;">Matt Crone</div>
<div class="t" style="left:565.80px;top:1422.02px;font-size:26px;color:#2b2b2b;letter-spacing:-0.363px;">Mila Schlegel</div>
<div class="t" style="left:604.10px;top:1462.02px;font-size:26px;color:#2b2b2b;letter-spacing:-0.595px;">Terry Nice</div>
<div class="t" style="left:550.20px;top:1498.02px;font-size:26px;color:#2b2b2b;letter-spacing:-0.667px;">Harold Spinder</div>
<div class="t" style="left:607.60px;top:1533.02px;font-size:26px;color:#2b2b2b;letter-spacing:-0.625px;">Tom Kelly</div>
<div class="t" style="left:595.50px;top:1569.02px;font-size:26px;color:#2b2b2b;letter-spacing:-1.058px;">Zeke Silver</div>
<div class="t" style="left:737.10px;top:1622.02px;font-size:26px;color:#2b2b2b;">0</div>
<div class="t" style="left:815.43px;top:1622.02px;font-size:26px;color:#2b2b2b;letter-spacing:2.040px;">10</div>
<div class="t" style="left:902.00px;top:1622.02px;font-size:26px;color:#2b2b2b;letter-spacing:2.040px;">20</div>
<div class="t" style="left:989.58px;top:1622.02px;font-size:26px;color:#2b2b2b;letter-spacing:1.040px;">30</div>
<div class="t" style="left:1076.15px;top:1622.02px;font-size:26px;color:#2b2b2b;letter-spacing:1.040px;">40</div>
<div class="t" style="left:1161.73px;top:1622.02px;font-size:26px;color:#2b2b2b;letter-spacing:2.040px;">50</div>
<div class="t" style="left:1248.30px;top:1622.02px;font-size:26px;color:#2b2b2b;letter-spacing:2.040px;">60</div>
<div class="t" style="left:1334.88px;top:1622.02px;font-size:26px;color:#2b2b2b;letter-spacing:2.040px;">70</div>
<div class="t" style="left:1421.45px;top:1622.02px;font-size:26px;color:#2b2b2b;letter-spacing:2.040px;">80</div>
<div class="t" style="left:902.50px;top:1662.32px;font-size:35.4px;color:#263238;letter-spacing:0.194px;">Count of Solved Tickets</div>
<div class="t" style="left:818.00px;top:1737.72px;font-size:26.6px;color:#2b2b2b;letter-spacing:0.111px;">Count of Solved Tickets</div>
<div class="t" style="left:441.6px;top:1211.7px;font-size:35.4px;color:#263238;transform:translate(-50%,-50%) rotate(-90deg);letter-spacing:0.3px;">Ticket Agent</div>
<div class="card" style="left:1530px;top:602px;width:1142px;height:1320.5px;border-color:#dcdcdc;"></div>
<div class="t" style="left:1572.90px;top:651.52px;font-size:36px;color:#222;font-weight:bold;letter-spacing:-1.238px;">Tickets by Channel</div>
<div class="t" style="left:1571.90px;top:700.77px;font-size:47.5px;color:#36424a;letter-spacing:-0.193px;-webkit-text-stroke:1.3px #fff;">45,554</div>
<div class="t" style="left:1572.90px;top:760.22px;font-size:24.6px;color:#8c8c8c;letter-spacing:0.048px;">Tickets By Channel in Last 30 days</div>
<div class="hr" style="left:1539px;top:1847.5px;width:1124px;"></div>
<svg style="left:1563px;top:1871.7px" width="28" height="28" viewBox="0 0 28 28"><path d="M13.9 0 C17.6 0 20.6 2.7 20.6 6.6 C20.6 9.4 19.6 12.2 17.9 13.9 L17.9 16.4 L26.6 22.6 C27.4 23.2 27.6 23.8 27.6 24.6 L27.6 27 L0.2 27 L0.2 24.6 C0.2 23.8 0.4 23.2 1.2 22.6 L9.9 16.4 L9.9 13.9 C8.2 12.2 7.2 9.4 7.2 6.6 C7.2 2.7 10.2 0 13.9 0 Z" fill="#848484"/></svg>
<svg style="left:2612px;top:1874.2px" width="28" height="25" viewBox="0 0 28 25"><rect x="0" y="0" width="4.4" height="4.2" fill="#848484"/><rect x="7" y="0" width="21" height="4.2" fill="#848484"/><rect x="0" y="6.9" width="4.4" height="4.2" fill="#848484"/><rect x="7" y="6.9" width="21" height="4.2" fill="#848484"/><rect x="0" y="13.8" width="4.4" height="4.2" fill="#848484"/><rect x="7" y="13.8" width="21" height="4.2" fill="#848484"/><rect x="0" y="20.7" width="4.4" height="4.2" fill="#848484"/><rect x="7" y="20.7" width="21" height="4.2" fill="#848484"/></svg>
<svg style="left:0;top:0" width="3283" height="1947" viewBox="0 0 3283 1947"><path d="M1801.15 1180.36 A310.0 310.0 0 0 1 2366.07 1116.00 L2212.43 1204.70 A132.6 132.6 0 0 0 1970.79 1232.23 Z" fill="#ff9800" stroke="#ff9800" stroke-width="0.6"/><path d="M2366.07 1116.00 A310.0 310.0 0 0 1 1940.73 1538.38 L2030.50 1385.37 A132.6 132.6 0 0 0 2212.43 1204.70 Z" fill="#03a9f4" stroke="#03a9f4" stroke-width="0.6"/><path d="M1940.73 1538.38 A310.0 310.0 0 0 1 1932.87 1533.61 L2027.14 1383.33 A132.6 132.6 0 0 0 2030.50 1385.37 Z" fill="#4caf50" stroke="#4caf50" stroke-width="0.6"/><path d="M1932.87 1533.61 A310.0 310.0 0 0 1 1801.15 1180.36 L1970.79 1232.23 A132.6 132.6 0 0 0 2027.14 1383.33 Z" fill="#f9ce1d" stroke="#f9ce1d" stroke-width="0.6"/><rect x="1701.8" y="1748.2" width="33.4" height="5" fill="#3f51b5"/><rect x="1869.6" y="1748.2" width="33.4" height="5" fill="#03a9f4"/><rect x="1997.2" y="1748.2" width="33.4" height="5" fill="#4caf50"/><rect x="2175.5" y="1748.2" width="33.4" height="5" fill="#f9ce1d"/><rect x="2338.5" y="1748.2" width="33.4" height="5" fill="#ff9800"/></svg>
<div class="t" style="left:1747.30px;top:1737.72px;font-size:26.6px;color:#2b2b2b;letter-spacing:0.323px;">No Value</div>
<div class="t" style="left:1914.60px;top:1737.72px;font-size:26.6px;color:#2b2b2b;letter-spacing:0.528px;">Email</div>
<div class="t" style="left:2042.20px;top:1737.72px;font-size:26.6px;color:#2b2b2b;letter-spacing:0.313px;">PortalApp</div>
<div class="t" style="left:2222.50px;top:1737.72px;font-size:26.6px;color:#2b2b2b;letter-spacing:0.274px;">WebApp</div>
<div class="t" style="left:2385.50px;top:1737.72px;font-size:26.6px;color:#2b2b2b;letter-spacing:0.194px;">Webform</div>
<div class="card" style="left:2694px;top:604px;width:557px;height:1315px;border-color:#e4e4e4;"></div>
<div class="t" style="left:2729.00px;top:653.52px;font-size:36px;color:#111;font-weight:bold;letter-spacing:-1.527px;">Agent Touches</div>
<div class="t" style="left:2727.50px;top:702.02px;font-size:50px;color:#555;letter-spacing:-0.308px;-webkit-text-stroke:1.9px #fff;">10</div>
<div class="t" style="left:2729.00px;top:763.22px;font-size:23.6px;color:#777;letter-spacing:-0.729px;">Total Agent Touches in the Last 30 Days</div>
<div class="hr" style="left:2703px;top:1847.6px;width:541px;background:#e9e9e9;"></div>
<svg style="left:2726.5px;top:1871.7px" width="28" height="28" viewBox="0 0 28 28"><path d="M13.9 0 C17.6 0 20.6 2.7 20.6 6.6 C20.6 9.4 19.6 12.2 17.9 13.9 L17.9 16.4 L26.6 22.6 C27.4 23.2 27.6 23.8 27.6 24.6 L27.6 27 L0.2 27 L0.2 24.6 C0.2 23.8 0.4 23.2 1.2 22.6 L9.9 16.4 L9.9 13.9 C8.2 12.2 7.2 9.4 7.2 6.6 C7.2 2.7 10.2 0 13.9 0 Z" fill="#848484"/></svg>
<svg style="left:3193.4px;top:1874.2px" width="28" height="25" viewBox="0 0 28 25"><rect x="0" y="0" width="4.4" height="4.2" fill="#848484"/><rect x="7" y="0" width="21" height="4.2" fill="#848484"/><rect x="0" y="6.9" width="4.4" height="4.2" fill="#848484"/><rect x="7" y="6.9" width="21" height="4.2" fill="#848484"/><rect x="0" y="13.8" width="4.4" height="4.2" fill="#848484"/><rect x="7" y="13.8" width="21" height="4.2" fill="#848484"/><rect x="0" y="20.7" width="4.4" height="4.2" fill="#848484"/><rect x="7" y="20.7" width="21" height="4.2" fill="#848484"/></svg>
<div class="a" style="left:2732px;top:826px;width:479px;height:973.5px;box-sizing:border-box;border:2px solid #e0e0e0;background:#fff;"></div>
<div class="a" style="left:2734px;top:828px;width:475px;height:76px;background:#f7f7f7;"></div>
<div class="a" style="left:2734px;top:1740px;width:475px;height:57.5px;background:#f7f7f7;border-top:2px solid #e0e0e0;box-sizing:border-box;"></div>
<div class="a" style="left:2734px;top:976px;width:475px;height:2px;background:#e0e0e0;"></div>
<div class="a" style="left:2734px;top:1056.3px;width:475px;height:2px;background:#e0e0e0;"></div>
<div class="a" style="left:2734px;top:1134.5px;width:475px;height:2px;background:#e0e0e0;"></div>
<div class="a" style="left:2734px;top:1214.5px;width:475px;height:2px;background:#e0e0e0;"></div>
<div class="t" style="left:2750.60px;top:847.27px;font-size:25.5px;color:#222;font-weight:bold;letter-spacing:-0.432px;-webkit-text-stroke:0.55px #f7f7f7;">Owner</div>
<div class="t" style="left:3013.50px;top:847.27px;font-size:25.5px;color:#222;font-weight:bold;letter-spacing:-0.073px;-webkit-text-stroke:0.55px #f7f7f7;">Total Touches</div>
<div class="t" style="left:2750.40px;top:926.02px;font-size:26px;color:#2f8bbf;letter-spacing:0.471px;">Paul Smith</div>
<div class="t" style="left:3073.60px;top:926.02px;font-size:26px;color:#222;">3</div>
<div class="t" style="left:2750.40px;top:1004.02px;font-size:26px;color:#2f8bbf;letter-spacing:0.006px;">Patrick O’Brien</div>
<div class="t" style="left:3073.60px;top:1004.02px;font-size:26px;color:#222;">4</div>
<div class="t" style="left:2751.40px;top:1082.02px;font-size:26px;color:#2a2a2a;letter-spacing:-0.019px;">Queue: New Tickets</div>
<div class="t" style="left:3073.10px;top:1082.02px;font-size:26px;color:#222;">1</div>
<div class="t" style="left:2750.40px;top:1159.02px;font-size:26px;color:#2f8bbf;letter-spacing:0.091px;">Leah Wright</div>
<div class="t" style="left:3073.60px;top:1159.02px;font-size:26px;color:#222;">4</div>
<div class="t" style="left:2751.10px;top:1756.27px;font-size:25.5px;color:#222;font-weight:bold;letter-spacing:-0.257px;-webkit-text-stroke:0.55px #f7f7f7;">Grand Total: (Count: 4)</div>
<div class="t" style="left:3073.40px;top:1756.27px;font-size:25.5px;color:#222;font-weight:bold;letter-spacing:2.118px;-webkit-text-stroke:0.55px #f7f7f7;">10</div>
<div class="a" style="left:0;top:1945.6px;width:3283px;height:1.4px;background:#8a8a8a;"></div>
<div class="a" style="left:3281.6px;top:1937px;width:1.4px;height:10px;background:#777;"></div>
</body></html>
